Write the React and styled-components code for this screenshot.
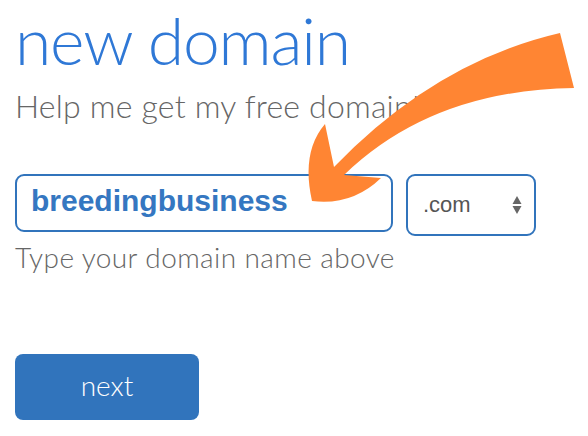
import React from "react";
import styled, { createGlobalStyle } from "styled-components";

const COLORS = {
  title: "#2f78d6",
  text: "#666666",
  blue: "#3174bc",
  inputText: "#3577c1",
  orange: "#ff8533",
};

const GlobalStyle = createGlobalStyle`
  html, body {
    margin: 0;
    padding: 0;
    background: #ffffff;
  }

  body {
    font-family: "Lato", "Open Sans", sans-serif;
  }
`;

const Page = styled.div`
  position: relative;
  width: 588px;
  height: 436px;
  overflow: hidden;
  padding-left: 15px;
  box-sizing: border-box;
  display: flex;
  flex-direction: column;
  align-items: flex-start;
`;

const Title = styled.h1`
  margin: 0;
  font-family: "Lato", sans-serif;
  font-weight: 300;
  font-size: 66px;
  line-height: 80px;
  letter-spacing: -1.2px;
  color: ${COLORS.title};
`;

const Lead = styled.p`
  margin: ${(p) => p.$top}px 0 0;
  font-family: "Lato", sans-serif;
  font-weight: 300;
  font-size: ${(p) => p.$size}px;
  line-height: ${(p) => p.$line}px;
  letter-spacing: ${(p) => p.$spacing || 0}px;
  color: ${COLORS.text};
`;

const DomainRow = styled.div`
  margin-top: 48px;
  display: flex;
  align-items: flex-start;
  gap: 13px;
`;

const DomainInput = styled.input`
  width: 378px;
  height: 58px;
  box-sizing: border-box;
  padding: 0 14px 4px;
  border: 2px solid ${COLORS.blue};
  border-radius: 9px;
  outline: none;
  font-family: "Liberation Sans", Arial, sans-serif;
  font-weight: 700;
  font-size: 30px;
  color: ${COLORS.inputText};
  background: #fff;
`;

const TldSelect = styled.div`
  width: 130px;
  height: 62px;
  box-sizing: border-box;
  padding: 0 12px 0 15px;
  border: 2px solid ${COLORS.blue};
  border-radius: 9px;
  display: flex;
  align-items: center;
  justify-content: space-between;
  font-family: "Liberation Sans", Arial, sans-serif;
  font-size: 22px;
  line-height: 1;
  color: #555;
`;

const NextButton = styled.button`
  margin-top: 81px;
  width: 184px;
  height: 66px;
  border: none;
  border-radius: 8px;
  background: ${COLORS.blue};
  color: #fff;
  font-family: "Lato", sans-serif;
  font-weight: 300;
  font-size: 28px;
  padding: 0 0 4px;
  cursor: pointer;
`;

const ArrowLayer = styled.svg`
  position: absolute;
  top: 0;
  left: 0;
  pointer-events: none;
`;

const Stepper = () => (
  <svg width="10" height="20" viewBox="0 0 10 20">
    <path d="M5 1 L9.5 9 L0.5 9 Z" fill="#666" />
    <path d="M0.5 11 L9.5 11 L5 19 Z" fill="#666" />
  </svg>
);

const App = () => (
  <>
    <GlobalStyle />
    <Page>
      <Title>new domain</Title>
      <Lead $top={6} $size={32} $line={40} $spacing={0.2}>
        Help me get my free domain!
      </Lead>
      <DomainRow>
        <DomainInput defaultValue="breedingbusiness" />
        <TldSelect>
          <span>.com</span>
          <Stepper />
        </TldSelect>
      </DomainRow>
      <Lead $top={5} $size={28} $line={32} $spacing={0.4}>
        Type your domain name above
      </Lead>
      <NextButton>next</NextButton>
      <ArrowLayer width="588" height="436" viewBox="0 0 588 436">
        <path
          d="M560 33 Q435 62 334 167 L325 124 Q301 152 312 201 Q352 206 381 178 L344 175 Q432 90 574 88 Z"
          fill={COLORS.orange}
        />
      </ArrowLayer>
    </Page>
  </>
);

export default App;
